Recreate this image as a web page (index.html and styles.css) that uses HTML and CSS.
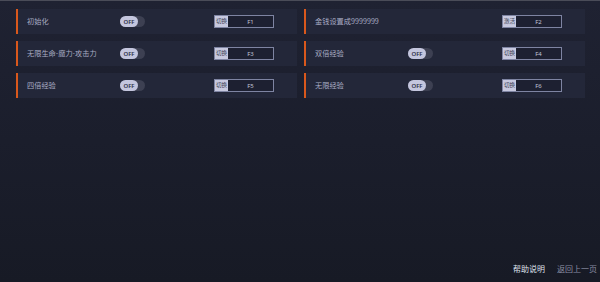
FILE: index.html
```html
<!DOCTYPE html>
<html lang="zh">
<head>
<meta charset="utf-8">
<link rel="stylesheet" href="styles.css">
</head>
<body>
<div class="page">
  <div class="grid">
    <div class="row">
      <span class="label">初始化</span>
      <span class="toggle"><span class="knob">OFF</span></span>
      <span class="key"><span class="key-tag">切换</span><span class="key-name">F1</span></span>
    </div>
    <div class="row">
      <span class="label">金钱设置成9999999</span>
      <span class="toggle-empty"></span>
      <span class="key"><span class="key-tag">激活</span><span class="key-name">F2</span></span>
    </div>
    <div class="row">
      <span class="label">无限生命-魔力-攻击力</span>
      <span class="toggle"><span class="knob">OFF</span></span>
      <span class="key"><span class="key-tag">切换</span><span class="key-name">F3</span></span>
    </div>
    <div class="row">
      <span class="label">双倍经验</span>
      <span class="toggle"><span class="knob">OFF</span></span>
      <span class="key"><span class="key-tag">切换</span><span class="key-name">F4</span></span>
    </div>
    <div class="row">
      <span class="label">四倍经验</span>
      <span class="toggle"><span class="knob">OFF</span></span>
      <span class="key"><span class="key-tag">切换</span><span class="key-name">F5</span></span>
    </div>
    <div class="row">
      <span class="label">无限经验</span>
      <span class="toggle"><span class="knob">OFF</span></span>
      <span class="key"><span class="key-tag">切换</span><span class="key-name">F6</span></span>
    </div>
  </div>
  <div class="footer">
    <span class="help">帮助说明</span>
    <span class="back">返回上一页</span>
  </div>
</div>
</body>
</html>
```
FILE: styles.css
```css
html, body {
  margin: 0;
  padding: 0;
  height: 100%;
}
body {
  background: linear-gradient(180deg, #1f2232 0%, #1b1e2c 50%, #171a25 100%);
  font-family: "Noto Sans CJK SC", "Noto Sans", sans-serif;
  overflow: hidden;
}
.page {
  height: 282px;
  box-sizing: border-box;
  border-top: 1px solid #4a4c58;
  display: flex;
  flex-direction: column;
}
.grid {
  display: grid;
  grid-template-columns: 281px 281px;
  column-gap: 7px;
  row-gap: 7px;
  padding: 8px 15px 0 16px;
}
.row {
  height: 25px;
  background: #232739;
  border-left: 2px solid #d9581c;
  display: flex;
  align-items: center;
  padding-left: 9px;
}
.label {
  width: 93px;
  font-size: 7.2px;
  color: #a9adc4;
  white-space: nowrap;
  line-height: 1;
}
.toggle, .toggle-empty {
  width: 25px;
  height: 11px;
  margin-right: 69px;
  flex: none;
}
.toggle {
  background: #3d4052;
  border-radius: 6px;
  display: flex;
  align-items: center;
}
.knob {
  width: 18px;
  height: 11px;
  border-radius: 6px;
  background: #c4c6de;
  color: #2c2f44;
  font-family: "Noto Sans", sans-serif;
  font-size: 6px;
  font-weight: 600;
  display: flex;
  align-items: center;
  justify-content: center;
  line-height: 1;
}
.key {
  width: 60px;
  height: 13px;
  box-sizing: border-box;
  border: 1px solid #7e84a2;
  display: flex;
  flex: none;
  background: #1d2031;
}
.key-tag {
  width: 13px;
  background: #c7c9df;
  color: #3a3d54;
  font-size: 5.6px;
  display: flex;
  align-items: center;
  justify-content: center;
  line-height: 1;
  white-space: nowrap;
  overflow: hidden;
}
.key-name {
  flex: 1;
  color: #c0c4d8;
  font-family: "Noto Sans", sans-serif;
  font-size: 6px;
  display: flex;
  align-items: center;
  justify-content: center;
  line-height: 1;
}
.footer {
  margin-top: auto;
  display: flex;
  justify-content: flex-end;
  gap: 12px;
  padding: 0 3px 8px 0;
  font-size: 8px;
  line-height: 10px;
}
.help {
  color: #dfe1ec;
}
.back {
  color: #8a8ea3;
}
```
